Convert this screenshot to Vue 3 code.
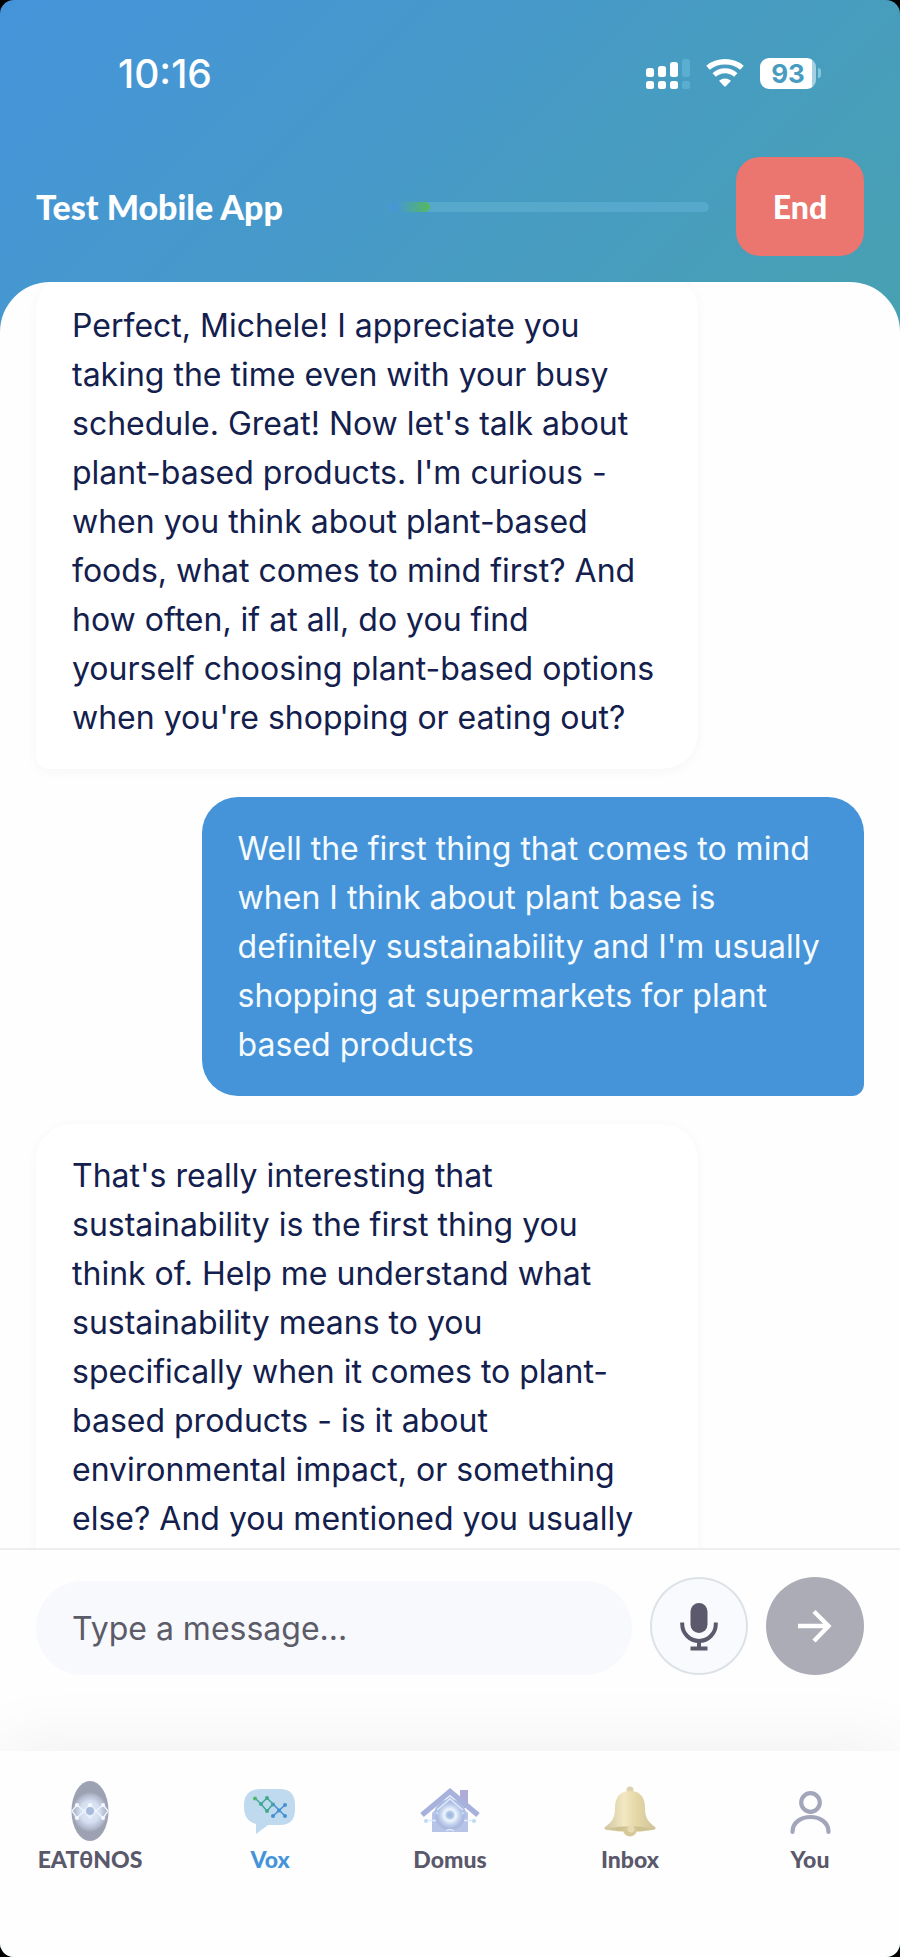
<template>
    <div class="phone">
        <header class="header">
            <div class="status-bar">
                <span class="time">10:16</span>
                <div class="indicators">
                    <svg class="signal" viewBox="0 0 44 31" aria-hidden="true">
                        <g fill="#fff">
                            <rect x="0" y="10" width="8" height="9" rx="2.5" />
                            <rect x="12" y="8" width="8" height="11" rx="2.5" />
                            <rect x="24" y="4" width="8" height="15" rx="2.5" />
                            <rect x="0" y="23" width="8" height="8" rx="2.5" />
                            <rect x="12" y="23" width="8" height="8" rx="2.5" />
                            <rect x="24" y="23" width="8" height="8" rx="2.5" />
                        </g>
                        <g fill="#5aaed0">
                            <rect x="36" y="1" width="8" height="18" rx="2.5" />
                            <rect x="36" y="23" width="8" height="8" rx="2.5" />
                        </g>
                    </svg>
                    <svg class="wifi" viewBox="0 0 38 28" aria-hidden="true">
                        <path d="M2 8.800C11.500 0.800 26.500 0.800 36 8.800" fill="none" stroke="#fff"
                            stroke-width="5.400" />
                        <path d="M8.200 16C14.400 10.400 23.600 10.400 29.800 16" fill="none" stroke="#fff"
                            stroke-width="5" />
                        <path d="M13 21.800Q19 17 25 21.800L19.800 27.200Q19 28 18.200 27.200Z" fill="#fff" />
                    </svg>
                    <div class="battery">
                        <span class="battery-level">93</span>
                        <span class="battery-tip"></span>
                    </div>
                </div>
            </div>
            <div class="title-bar">
                <h1 class="title">Test Mobile App</h1>
                <div class="progress" role="progressbar" aria-label="Progress" :aria-valuenow="progress"
                    aria-valuemin="0" aria-valuemax="100">
                    <div class="progress-fill" :style="{ width: progress + '%' }"></div>
                </div>
                <button class="end-btn" type="button">End</button>
            </div>
        </header>

        <main ref="chat" class="chat">
            <div v-for="(message, i) in messages" :key="i" class="bubble" :class="message.from">{{ message.text }}</div>
        </main>

        <form class="composer" @submit.prevent="send">
            <input v-model="draft" class="message-input" type="text" placeholder="Type a message..."
                aria-label="Type a message..." />
            <button class="round-btn mic-btn" type="button" aria-label="Record">
                <svg viewBox="0 0 98 98" aria-hidden="true">
                    <rect x="40.5" y="26" width="17" height="30" rx="8.5" fill="#5b596b" />
                    <path d="M32.2 45.5V47A16.8 17 0 0 0 65.8 47V45.5" fill="none" stroke="#5b596b"
                        stroke-width="4" />
                    <path d="M49 64V72M40.5 71.5H57.5" fill="none" stroke="#5b596b" stroke-width="4" />
                </svg>
            </button>
            <button class="round-btn send-btn" type="submit" aria-label="Send">
                <svg viewBox="0 0 98 98" aria-hidden="true">
                    <path d="M32 49H63M48 34.5L62.5 49L48 64" fill="none" stroke="#fff" stroke-width="4.4" />
                </svg>
            </button>
        </form>

        <nav class="tabs">
            <a v-for="tab in tabs" :key="tab.id" class="tab" :class="{ active: activeTab === tab.id }" href="#"
                @click.prevent="activeTab = tab.id">
                <svg v-if="tab.id === 'eatonos'" class="tab-icon" viewBox="0 0 60 60" aria-hidden="true">
                    <defs>
                        <radialGradient id="egg" cx="50%" cy="50%" r="50%">
                            <stop offset="0" stop-color="#e6edf9" />
                            <stop offset="0.55" stop-color="#d3def0" />
                            <stop offset="0.85" stop-color="#b3bace" />
                            <stop offset="1" stop-color="#9da2b3" />
                        </radialGradient>
                    </defs>
                    <ellipse cx="30" cy="30" rx="18.5" ry="30" fill="#9da2b3" />
                    <ellipse cx="30" cy="31" rx="18" ry="20" fill="url(#egg)" />
                    <g fill="none" stroke="#eef5fe" stroke-width="1.3">
                        <path d="M12 30L17 24L24 30L17 37ZM48 30L43 24L36 30L43 37ZM24 30L30 24L36 30L30 37Z" />
                    </g>
                    <circle cx="30" cy="30" r="4" fill="#a9bbdc" />
                    <g fill="#f5f9ff">
                        <circle cx="17" cy="24" r="2" />
                        <circle cx="17" cy="37" r="2" />
                        <circle cx="30" cy="24" r="2" />
                        <circle cx="43" cy="24" r="2" />
                        <circle cx="43" cy="37" r="2" />
                    </g>
                </svg>
                <svg v-else-if="tab.id === 'vox'" class="tab-icon" viewBox="0 0 60 60" aria-hidden="true">
                    <path
                        d="M21 8H40Q55 8 55 24V28Q55 44 40 44H28L16 53V43Q4 40 4 26V24Q4 8 21 8Z"
                        fill="#bfd9ee" />
                    <g fill="none" stroke-width="1.5">
                        <path d="M15 17L21 23L27 17L33 23L27 30L21 23" stroke="#42a99a" />
                        <path d="M33 23L45 35M45 24L33 35" stroke="#4590cf" />
                    </g>
                    <circle cx="15" cy="17.5" r="2" fill="#4fb769" />
                    <circle cx="21" cy="23" r="2" fill="#43a890" />
                    <circle cx="27" cy="17" r="2" fill="#43a890" />
                    <circle cx="27" cy="30" r="2" fill="#43a890" />
                    <circle cx="33" cy="23.5" r="2" fill="#459cac" />
                    <g fill="#4590d2">
                        <circle cx="39" cy="29.5" r="2" />
                        <circle cx="45" cy="24" r="2" />
                        <circle cx="33" cy="35" r="2" />
                        <circle cx="45" cy="35" r="2" />
                    </g>
                </svg>
                <svg v-else-if="tab.id === 'domus'" class="tab-icon" viewBox="0 0 60 60" aria-hidden="true">
                    <defs>
                        <radialGradient id="hearth" cx="50%" cy="50%" r="50%">
                            <stop offset="0" stop-color="#9fb4de" />
                            <stop offset="0.18" stop-color="#aac3e6" />
                            <stop offset="0.36" stop-color="#eef6fc" />
                            <stop offset="0.6" stop-color="#c3d2ee" />
                            <stop offset="0.85" stop-color="#a9b6df" />
                            <stop offset="1" stop-color="#b5c2e5" />
                        </radialGradient>
                    </defs>
                    <rect x="40" y="9" width="8" height="18" fill="#aeabd9" />
                    <path d="M12 32L30 15L48 32V51H12Z" fill="#b7c4e8" />
                    <circle cx="30" cy="34" r="16" fill="url(#hearth)" />
                    <path d="M17 29L30 18L43 29M6 39.5H16M44 39.5H54M26 50Q30 47 34 50" fill="none" stroke="#dfeafa"
                        stroke-width="1.5" />
                    <path d="M2 34L30 10.500L58 34" fill="none" stroke="#a7b2dc" stroke-width="5.5" />
                    <g fill="#bcdcf3">
                        <circle cx="6" cy="40" r="2" />
                        <circle cx="54" cy="40" r="2" />
                        <circle cx="17" cy="32" r="1.5" />
                        <circle cx="43" cy="32" r="1.5" />
                    </g>
                </svg>
                <svg v-else-if="tab.id === 'inbox'" class="tab-icon" viewBox="0 0 60 60" aria-hidden="true">
                    <defs>
                        <linearGradient id="brass" x1="0" y1="0" x2="1" y2="0">
                            <stop offset="0" stop-color="#cfc5a2" />
                            <stop offset="0.38" stop-color="#f3e8c2" />
                            <stop offset="0.62" stop-color="#e6d8a6" />
                            <stop offset="1" stop-color="#cdc29c" />
                        </linearGradient>
                    </defs>
                    <circle cx="30" cy="9" r="3.5" fill="#ddd2aa" />
                    <path
                        d="M30 10C40 10 45 16 45 27C45 38 49 41 55 46Q57 48 53 49Q30 53 7 49Q3 48 5 46C12 41 15 37 15 27C15 16 20 10 30 10Z"
                        fill="url(#brass)" />
                    <path d="M7 47.5Q30 43 53 47.5Q42 51 30 50Q18 51 7 47.5Z" fill="#cfc292" />
                    <path d="M23 48Q30 43 37 48Q37 55 30 55.5Q23 55 23 48Z" fill="#d6c998" />
                    <circle cx="31" cy="48" r="3.5" fill="#e6dbb3" />
                </svg>
                <svg v-else class="tab-icon" viewBox="0 0 60 60" aria-hidden="true">
                    <g fill="none" stroke="#a3a5bb" stroke-width="4.2" stroke-linecap="round">
                        <circle cx="30.5" cy="21.5" r="9.3" />
                        <path d="M12.5 51C12.500 31 48.500 31 48.500 51" />
                    </g>
                </svg>
                <span class="tab-label">{{ tab.label }}</span>
            </a>
        </nav>
    </div>
</template>

<script setup>
import { onMounted, ref } from 'vue'

const progress = ref(13)
const draft = ref('')
const activeTab = ref('vox')
const chat = ref(null)

const messages = ref([
    {
        from: 'agent',
        text: `Perfect, Michele! I appreciate you
taking the time even with your busy
schedule. Great! Now let's talk about
plant-based products. I'm curious -
when you think about plant-based
foods, what comes to mind first? And
how often, if at all, do you find
yourself choosing plant-based options
when you're shopping or eating out?`
    },
    {
        from: 'user',
        text: `Well the first thing that comes to mind
when I think about plant base is
definitely sustainability and I'm usually
shopping at supermarkets for plant
based products`
    },
    {
        from: 'agent',
        text: `That's really interesting that
sustainability is the first thing you
think of. Help me understand what
sustainability means to you
specifically when it comes to plant-
based products - is it about
environmental impact, or something
else? And you mentioned you usually`
    }
])

const tabs = [
    { id: 'eatonos', label: 'EATθNOS' },
    { id: 'vox', label: 'Vox' },
    { id: 'domus', label: 'Domus' },
    { id: 'inbox', label: 'Inbox' },
    { id: 'you', label: 'You' }
]

function send() {
    const text = draft.value.trim()
    if (!text) return
    messages.value.push({ from: 'user', text })
    draft.value = ''
}

onMounted(() => {
    // tuck the top of the first bubble under the header
    chat.value.scrollTop = 36
})
</script>

<style>
body {
    margin: 0;
    background: #000;
}
</style>

<style scoped>
.phone {
    display: flex;
    flex-direction: column;
    height: 100vh;
    overflow: hidden;
    border-radius: 14px;
    background: linear-gradient(135deg, #4594db, #4bb27a);
    font-family: Inter, "Liberation Sans", sans-serif;
}

.status-bar {
    display: flex;
    align-items: center;
    justify-content: space-between;
    height: 146px;
    padding: 0 79px 0 118px;
    color: #fff;
}

.time {
    font-size: 39px;
    font-weight: 500;
}

.indicators {
    display: flex;
    align-items: center;
    gap: 16px;
}

.signal {
    width: 44px;
    height: 31px;
}

.wifi {
    width: 38px;
    height: 28px;
}

.battery {
    display: flex;
    align-items: center;
    gap: 2px;
}

.battery-level {
    width: 56px;
    border-radius: 9px;
    background: linear-gradient(90deg, #fff 93%, #a5d0e3 93%);
    color: #489cc0;
    font-size: 26px;
    font-weight: 700;
    line-height: 31px;
    text-align: center;
}

.battery-tip {
    width: 3px;
    height: 10px;
    border-radius: 0 3px 3px 0;
    background: #8ac3dc;
}

.title-bar {
    display: flex;
    align-items: center;
    gap: 27px;
    padding: 11px 36px 26px;
}

.title {
    flex: 1;
    margin: 0;
    color: #fff;
    font-family: Lato, sans-serif;
    font-size: 34px;
    font-weight: 900;
    line-height: 40px;
    white-space: nowrap;
}

.progress {
    flex: 0 1 321px;
    height: 10px;
    border-radius: 5px;
    background: #56a9cb;
    overflow: hidden;
}

.progress-fill {
    height: 100%;
    border-radius: 5px;
    background: linear-gradient(90deg, #4698d2 20%, #55b95f);
}

.end-btn {
    width: 128px;
    height: 99px;
    border: none;
    border-radius: 24px;
    background: #eb756f;
    color: #fff;
    font-family: Lato, sans-serif;
    font-size: 32px;
    font-weight: 900;
    cursor: pointer;
}

.chat {
    flex: 1;
    min-height: 0;
    display: flex;
    flex-direction: column;
    gap: 28px;
    padding: 28px 36px;
    border-radius: 50px 50px 0 0;
    background: #fefefe;
    overflow-y: auto;
    scrollbar-width: none;
}

.bubble {
    flex-shrink: 0;
    box-sizing: border-box;
    width: 80%;
    padding: 27px 30px 27px 36px;
    font-size: 32px;
    line-height: 49px;
    white-space: pre-line;
}

.bubble.agent {
    align-self: flex-start;
    border-radius: 36px 36px 36px 12px;
    background: #fff;
    box-shadow: 0 2px 12px rgba(0, 0, 0, 0.04);
    color: #13204d;
}

.bubble.user {
    align-self: flex-end;
    border-radius: 36px 36px 12px 36px;
    background: #4594d9;
    color: #f6fbff;
}

/* the latest reply runs on below the fold */
.bubble:last-child {
    padding-bottom: 76px;
}

.composer {
    display: flex;
    align-items: flex-end;
    gap: 18px;
    padding: 27px 36px 76px;
    border-top: 2px solid #eeeeef;
    background: #fefefe;
}

.message-input {
    flex: 1;
    min-width: 0;
    box-sizing: border-box;
    height: 94px;
    padding: 0 36px;
    border: none;
    border-radius: 47px;
    background: #f7f9fd;
    color: #13204d;
    font-family: inherit;
    font-size: 32px;
}

.message-input::placeholder {
    color: #5c5b68;
    opacity: 1;
}

.round-btn {
    flex: none;
    box-sizing: border-box;
    width: 98px;
    height: 98px;
    padding: 0;
    border: none;
    border-radius: 50%;
    cursor: pointer;
}

.round-btn svg {
    display: block;
    width: 100%;
    height: 100%;
}

.mic-btn {
    background: #f8fafe;
    box-shadow: inset 0 0 0 2px #dde2e7;
}

.send-btn {
    background: #abacb6;
}

.tabs {
    display: grid;
    grid-template-columns: repeat(5, 1fr);
    padding: 30px 0 85px;
    background: #fefefe;
    box-shadow: 0 -12px 60px rgba(0, 0, 0, 0.05);
}

.tab {
    display: flex;
    flex-direction: column;
    align-items: center;
    gap: 5px;
    color: #5a586b;
    text-decoration: none;
}

.tab.active {
    color: #4594d9;
}

.tab-icon {
    width: 60px;
    height: 60px;
}

.tab-label {
    font-family: Lato, sans-serif;
    font-size: 23px;
    font-weight: 900;
    line-height: 26px;
}
</style>
